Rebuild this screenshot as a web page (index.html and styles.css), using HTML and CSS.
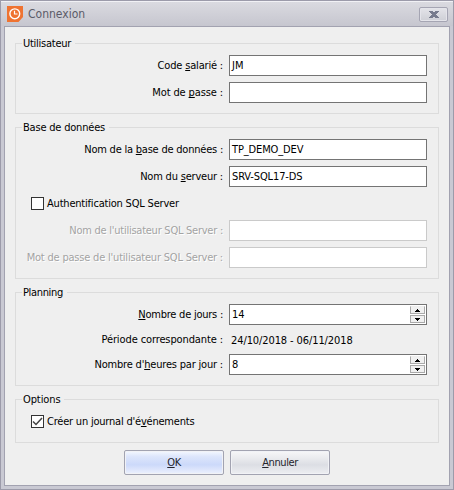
FILE: index.html
```html
<!DOCTYPE html>
<html lang="fr">
<head>
<meta charset="utf-8">
<title>Connexion</title>
<link rel="stylesheet" href="styles.css">
</head>
<body>
<div class="window">
  <header class="titlebar">
    <svg class="logo" width="16" height="16" viewBox="0 0 16 16">
      <path d="M0 0H16V11L11.5 16H0Z" fill="#ef7331"/>
      <circle cx="7.8" cy="7.8" r="4.9" fill="none" stroke="#fff" stroke-width="1.4"/>
      <path d="M7.5 4.8V8H10.5" fill="none" stroke="#fff" stroke-width="1.2"/>
    </svg>
    <h1 class="title">Connexion</h1>
    <button class="close" aria-label="Fermer">
      <svg width="10" height="7" viewBox="0 0 10 7" shape-rendering="crispEdges" fill="#777b8d">
        <path d="M0 0H4V1H6V0H10V1H9V2H8V3H7V4H8V5H9V6H10V7H6V6H4V7H0V6H1V5H2V4H3V3H2V2H1V1H0Z"/>
      </svg>
    </button>
  </header>
  <main class="client">
    <fieldset class="group user">
      <legend><span class="t-user">Utilisateur</span></legend>
      <div class="row"><label><span class="t-code">Code <u>s</u>alarié :</span></label><div class="field"><span class="v-jm">JM</span></div></div>
      <div class="row"><label><span class="t-pass">Mot de <u>p</u>asse :</span></label><div class="field"></div></div>
    </fieldset>
    <fieldset class="group database">
      <legend><span class="t-base">Base de données</span></legend>
      <div class="row"><label><span class="t-dbname">Nom de la <u>b</u>ase de données :</span></label><div class="field"><span class="v-db">TP_DEMO_DEV</span></div></div>
      <div class="row"><label><span class="t-server">Nom du <u>s</u>erveur :</span></label><div class="field"><span class="v-srv">SRV-SQL17-DS</span></div></div>
      <div class="check"><span class="box"></span><span class="t-auth">Authentification SQL Server</span></div>
      <div class="row disabled"><label><span class="t-sqluser">Nom de l'utilisateur SQL Server :</span></label><div class="field"></div></div>
      <div class="row disabled"><label><span class="t-sqlpass">Mot de passe de l'utilisateur SQL Server :</span></label><div class="field"></div></div>
    </fieldset>
    <fieldset class="group planning">
      <legend><span class="t-plan">Planning</span></legend>
      <div class="row"><label><span class="t-days"><u>N</u>ombre de jours :</span></label>
        <div class="field"><span class="v-14">14</span><span class="spin"><i class="up"></i><i class="down"></i></span></div></div>
      <div class="row"><label><span class="t-period">Période correspondante :</span></label><div class="value"><span class="v-dates">24/10/2018 - 06/11/2018</span></div></div>
      <div class="row"><label><span class="t-hours">Nombre d'<u>h</u>eures par jour :</span></label>
        <div class="field"><span class="v-8">8</span><span class="spin"><i class="up"></i><i class="down"></i></span></div></div>
    </fieldset>
    <fieldset class="group options">
      <legend><span class="t-opt">Options</span></legend>
      <div class="check"><span class="box"><svg width="11" height="11" viewBox="0 0 11 11"><path d="M1 5.5L4 8.5L10 2" fill="none" stroke="#444" stroke-width="1.5"/></svg></span><span class="t-log">Créer un journal d'é<u>v</u>énements</span></div>
    </fieldset>
    <footer class="actions">
      <button class="btn primary"><span class="t-ok"><u>O</u>K</span></button>
      <button class="btn"><span class="t-cancel"><u>A</u>nnuler</span></button>
    </footer>
  </main>
</div>
</body>
</html>
```
FILE: styles.css
```css
* { box-sizing: border-box; }
body {
  margin: 0;
  font: 11px/15px "DejaVu Sans Condensed", "DejaVu Sans", sans-serif;
  font-stretch: condensed;
  color: #000;
}
.window {
  width: 454px;
  height: 490px;
  display: flex;
  flex-direction: column;
  padding: 0 3px 3px;
  border: 1px solid #9c9baa;
  background: #c9c9d3;
}
.titlebar {
  display: flex;
  align-items: center;
  height: 25px;
  margin: 0 -3px;
  padding: 0 5px 0 6px;
  border-top: 1px solid #f1f1f5;
  background: linear-gradient(#dadae0, #c6c6cf);
}
.title {
  flex: 1;
  margin: 0 0 0 5px;
  font: 12px/16px "DejaVu Sans Condensed", sans-serif;
  font-stretch: condensed;
  color: #5b5b68;
}
.close {
  display: flex;
  align-items: center;
  justify-content: center;
  width: 29px;
  height: 15px;
  padding: 0;
  border: 1px solid #a5a5b3;
  border-radius: 2px;
  background: linear-gradient(#e4e4e9, #cecfd6);
  box-shadow: inset 0 0 0 1px #e4e4ea;
}
.client {
  flex: 1;
  display: flex;
  flex-direction: column;
  gap: 6px;
  padding: 9px 10px 0;
  border: 1px solid #a2a2b0;
  background: #efefef;
}
.group {
  display: flex;
  flex-direction: column;
  gap: 6px;
  width: 424px;
  min-width: 0;
  margin: 0;
  padding: 4px 11px 0 14px;
  border: 1px solid #dcdcdc;
}
.group legend {
  height: 15px;
  margin-left: -8px;
  padding: 0 4px 0 1px;
}
legend span, label span, .field > span:first-child, .value span, .check > span:last-child { white-space: nowrap; }
.t-user { letter-spacing: -0.25px; }
.t-code { letter-spacing: -0.18px; }
.t-pass { letter-spacing: -0.12px; }
.t-base { letter-spacing: -0.2px; }
.t-dbname { letter-spacing: -0.22px; }
.t-server { letter-spacing: -0.2px; }
.t-auth { letter-spacing: -0.2px; }
.t-sqluser { letter-spacing: -0.25px; }
.t-sqlpass { letter-spacing: -0.2px; }
.t-plan { letter-spacing: -0.35px; }
.t-opt { letter-spacing: -0.1px; }
.t-days { letter-spacing: -0.24px; }
.t-period { letter-spacing: -0.11px; }
.t-hours { letter-spacing: -0.19px; }
.t-log { letter-spacing: -0.21px; }
.v-db { letter-spacing: -0.13px; }
.v-srv { letter-spacing: -0.12px; }
.v-dates { letter-spacing: -0.1px; }
.t-cancel { letter-spacing: -0.4px; }
.t-ok { letter-spacing: -0.4px; }
.user { height: 78px; }
.database { height: 159px; }
.planning { height: 101px; gap: 4px; }
.options { height: 51px; }
.row {
  display: grid;
  grid-template-columns: minmax(0, 1fr) 198px;
  column-gap: 6px;
  align-items: center;
  height: 21px;
}
.row label {
  display: flex;
  justify-content: flex-end;
}
.field {
  display: flex;
  align-items: center;
  justify-content: space-between;
  height: 21px;
  padding: 0 1px 0 2px;
  border: 1px solid #747474;
  background: #fff;
}
.value { padding: 2px 0 0 2px; }
.disabled { color: #a3a3a3; text-shadow: 1px 1px 0 #fff; }
.disabled .field { border-color: #cacaca; }
.check {
  display: flex;
  align-items: center;
  gap: 3px;
  height: 21px;
  margin-left: 1px;
}
.box {
  display: flex;
  width: 13px;
  height: 13px;
  border: 1px solid #333;
  background: #fff;
}
.spin {
  display: flex;
  flex-direction: column;
  gap: 1px;
  width: 15px;
}
.spin i {
  display: flex;
  align-items: center;
  justify-content: center;
  height: 8px;
  border: 1px solid #aaa;
  background: #f0f0f0;
}
.spin .up { border-top-color: #eee; }
.up::before, .down::before {
  content: "";
  width: 5px;
  height: 3px;
  margin-top: 1px;
  background: #000;
}
.up::before { clip-path: polygon(2px 0, 3px 0, 3px 1px, 4px 1px, 4px 2px, 5px 2px, 5px 3px, 0 3px, 0 2px, 1px 2px, 1px 1px, 2px 1px); }
.down::before { clip-path: polygon(0 0, 5px 0, 5px 1px, 4px 1px, 4px 2px, 3px 2px, 3px 3px, 2px 3px, 2px 2px, 1px 2px, 1px 1px, 0 1px); }
u { text-decoration: underline; text-underline-offset: 1px; text-decoration-thickness: 1px; text-decoration-skip-ink: none; }
.actions {
  display: flex;
  gap: 6px;
  margin-top: 1px;
  padding-left: 109px;
}
.btn {
  width: 100px;
  height: 25px;
  padding: 0;
  border: 1px solid #a2a3b1;
  border-radius: 2px;
  font: inherit;
  color: #24242c;
  background: linear-gradient(#f7f7f9, #e8e9ed 35%, #dcdee4 60%, #edeef2);
  box-shadow: inset 0 0 0 1px #f1f2f6;
}
.primary { background: linear-gradient(#f5f8ff, #dce5fb 25%, #ccd9fa 60%, #edf1fd); }
```
